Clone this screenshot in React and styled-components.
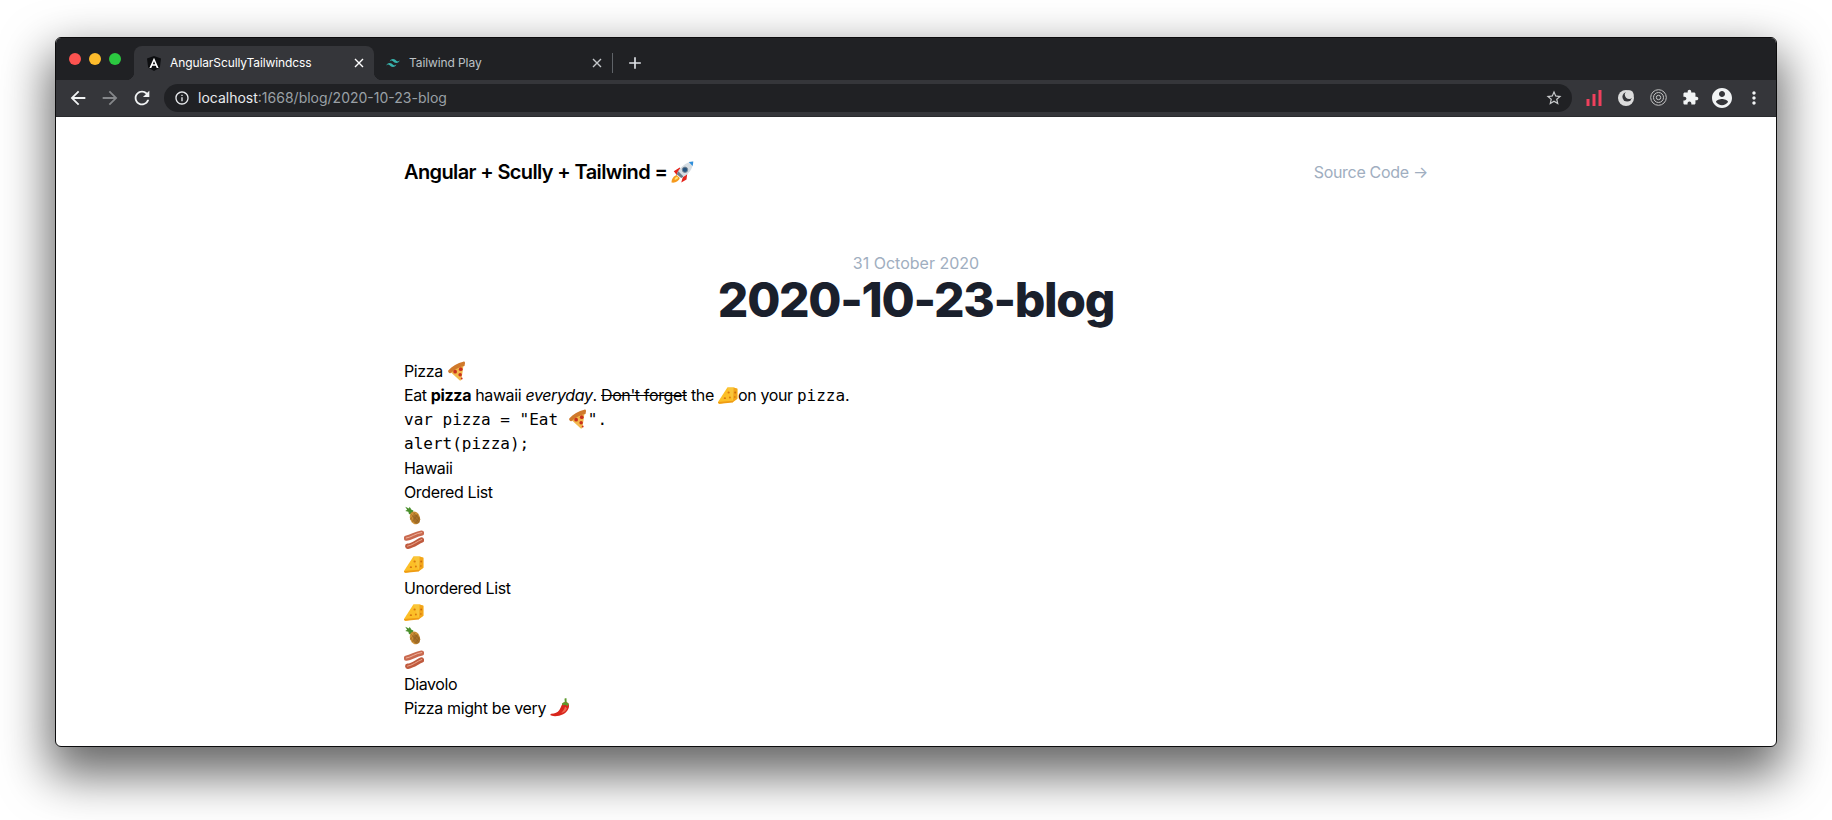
import styled, { createGlobalStyle } from 'styled-components';

const GlobalStyle = createGlobalStyle`
  html, body {
    margin: 0;
    padding: 0;
    background: #fff;
  }
  body {
    font-family: Inter, 'Liberation Sans', sans-serif;
  }
`;

const Page = styled.div`
  width: 1832px;
  height: 820px;
  padding: 37px 55px 73px;
  box-sizing: border-box;
  overflow: hidden;
  background: #fff;
`;

const BrowserWindow = styled.div`
  height: 710px;
  box-sizing: border-box;
  display: flex;
  flex-direction: column;
  border: 1px solid #0c0c0d;
  border-radius: 6px;
  box-shadow: 0 22px 48px 6px rgba(0, 0, 0, 0.6);
  overflow: hidden;
  background: #fff;
`;

const TabStrip = styled.div`
  height: 42px;
  flex: none;
  display: flex;
  align-items: flex-end;
  padding-left: 13px;
  background: #202124;
  box-sizing: border-box;
`;

const TrafficLights = styled.div`
  display: flex;
  gap: 8px;
  align-self: flex-start;
  margin-top: 15px;
  margin-right: 13px;
`;

const Light = styled.span`
  width: 12px;
  height: 12px;
  border-radius: 50%;
  background: ${props => props.$color};
`;

const Tab = styled.div`
  position: relative;
  width: ${props => props.$width}px;
  height: 34px;
  display: flex;
  align-items: center;
  gap: ${props => (props.$active ? 9 : 8)}px;
  padding: 0 10px 0 ${props => (props.$active ? 13 : 11)}px;
  box-sizing: border-box;
  border-radius: 8px 8px 0 0;
  font-size: 12px;
  color: ${props => (props.$active ? '#fff' : '#bdc1c6')};
  background: ${props => (props.$active ? '#35363a' : 'transparent')};

  ${props =>
    props.$active &&
    `
    &::before, &::after {
      content: '';
      position: absolute;
      bottom: 0;
      width: 8px;
      height: 8px;
    }
    &::before {
      left: -8px;
      background: radial-gradient(circle at 0 0, #202124 8px, #35363a 8.5px);
    }
    &::after {
      right: -8px;
      background: radial-gradient(circle at 100% 0, #202124 8px, #35363a 8.5px);
    }
  `}
`;

const TabTitle = styled.span`
  flex: 1;
  margin-bottom: 1px;
  white-space: nowrap;
  letter-spacing: -0.1px;
`;

const TabClose = styled.span`
  display: flex;
  color: ${props => (props.$active ? '#fff' : '#c4c7ca')};
`;

const TabSeparator = styled.span`
  width: 1px;
  height: 20px;
  margin-bottom: 7px;
  background: #5f6368;
`;

const NewTab = styled.div`
  width: 44px;
  height: 34px;
  display: flex;
  align-items: center;
  justify-content: center;
  color: #dee1e6;
`;

const Toolbar = styled.div`
  height: 37px;
  flex: none;
  display: flex;
  align-items: center;
  padding: 0 6px 1px 6px;
  box-sizing: border-box;
  background: #35363a;
  border-bottom: 1px solid #2a2b2e;
`;

const NavButton = styled.div`
  width: 32px;
  height: 28px;
  flex: none;
  display: flex;
  align-items: center;
  justify-content: center;
  color: ${props => (props.$dim ? '#85878a' : '#f1f3f4')};
`;

const Omnibox = styled.div`
  flex: 1;
  height: 28px;
  margin: 0 6px;
  display: flex;
  align-items: center;
  padding: 0 9px 0 10px;
  border-radius: 14px;
  background: #202124;
  font-size: 14px;
  color: #9aa0a6;
  white-space: nowrap;
`;

const InfoSlot = styled.span`
  display: flex;
  margin-right: 8px;
  color: #e8eaed;
`;

const Host = styled.span`
  color: #e8eaed;
`;

const Spacer = styled.span`
  flex: 1;
`;

const ExtensionButton = styled.div`
  width: 32px;
  height: 28px;
  flex: none;
  display: flex;
  align-items: center;
  justify-content: center;
  color: ${props => props.$color || '#f1f3f4'};
`;

const Content = styled.main`
  flex: 1;
  width: 1024px;
  margin: 0 auto;
  padding-top: 41px;
  color: #000;
`;

const SiteHeader = styled.header`
  display: flex;
  justify-content: space-between;
  align-items: center;
  height: 28px;
`;

const Brand = styled.div`
  display: flex;
  align-items: center;
  gap: 3px;
  font-size: 20px;
  font-weight: 600;
  letter-spacing: -0.63px;
`;

const SourceLink = styled.a`
  font-size: 16px;
  letter-spacing: -0.3px;
  color: #a0aec0;
  text-decoration: none;
`;

const PostHead = styled.div`
  margin-top: 65px;
  text-align: center;
`;

const PostDate = styled.div`
  font-size: 16px;
  line-height: 24px;
  color: #a0aec0;
`;

const PostTitle = styled.h1`
  margin: 1px 0 0;
  font-size: 48px;
  line-height: 48px;
  font-weight: 800;
  letter-spacing: -1.3px;
  color: #1a202c;
`;

const Article = styled.article`
  margin-top: 35px;
  font-size: 16px;
  line-height: 24px;
  letter-spacing: -0.37px;
`;

const Line = styled.div`
  height: 24px;
  white-space: nowrap;
`;

const CodeBlock = styled.div`
  margin-bottom: 1px;
`;

const Code = styled.code`
  font-family: 'DejaVu Sans Mono', 'Liberation Mono', monospace;
  font-size: 16px;
  line-height: 24px;
  letter-spacing: 0;
`;

const Glyph = styled.svg`
  display: inline-block;
  width: ${props => props.$size || 20}px;
  height: ${props => props.$size || 20}px;
  vertical-align: ${props => props.$shift || '-4px'};
`;

const Icon = ({ d, size = 24, fill = 'currentColor' }) => (
  <svg width={size} height={size} viewBox="0 0 24 24" fill={fill}>
    <path d={d} />
  </svg>
);

const CloseIcon = () => (
  <svg width="10" height="10" viewBox="0 0 10 10" stroke="currentColor" strokeWidth="1.4">
    <path d="M1 1l8 8M9 1l-8 8" />
  </svg>
);

const AngularLogo = () => (
  <svg width="14" height="15" viewBox="0 0 14 15">
    <path d="M7 0L0 2.400l1.100 9.200L7 15l5.900-3.400L14 2.400z" fill="#0d0e10" />
    <path d="M7 1.800L2.400 12h1.900l.9-2.300h3.600l.9 2.300h1.900zM5.800 8.300L7 5.300l1.200 3z" fill="#fff" />
  </svg>
);

const TailwindLogo = () => (
  <svg width="16" height="16" viewBox="0 0 24 24" fill="#38b2ac">
    <path d="M12 6c-2.670 0-4.330 1.330-5 4 1-1.330 2.170-1.830 3.500-1.500.76.19 1.310.74 1.910 1.350.98 1 2.090 2.150 4.590 2.150 2.670 0 4.330-1.330 5-4-1 1.330-2.170 1.830-3.500 1.500-.76-.19-1.310-.74-1.910-1.350C15.610 7.150 14.500 6 12 6zm-5 6c-2.670 0-4.330 1.330-5 4 1-1.330 2.170-1.830 3.500-1.500.76.19 1.310.74 1.910 1.350.98 1 2.090 2.150 4.590 2.150 2.670 0 4.330-1.330 5-4-1 1.330-2.170 1.830-3.500 1.500-.76-.19-1.310-.74-1.910-1.350C10.610 13.150 9.500 12 7 12z" />
  </svg>
);

const SignalBars = () => (
  <svg width="16" height="18" viewBox="0 0 16 18" fill="#f0405c">
    <rect x="0.500" y="10" width="3" height="7" />
    <rect x="6.500" y="5" width="3" height="12" />
    <rect x="12.500" y="1" width="3" height="16" />
  </svg>
);

const MoonBadge = () => (
  <svg width="16" height="16" viewBox="0 0 16 16">
    <circle cx="8" cy="8" r="8" fill="#dcdcdc" />
    <circle cx="9.200" cy="6.800" r="4.800" fill="#35363a" />
    <circle cx="11.200" cy="4.600" r="4.400" fill="#dcdcdc" />
  </svg>
);

const TargetBadge = () => (
  <svg width="17" height="17" viewBox="0 0 17 17" fill="none" stroke="#c4c4c4" strokeWidth="1">
    <circle cx="8.500" cy="8.500" r="7.800" />
    <circle cx="8.500" cy="8.500" r="5" />
    <circle cx="8.500" cy="8.500" r="2.200" />
  </svg>
);

const Rocket = () => (
  <Glyph $size={24} viewBox="0 0 32 32">
    <path d="M2 30c0-5 3-9 7-10l4 4c-1 4-6 7-11 6z" fill="#f59a1d" />
    <path d="M6 26c0-2 2-4 4-4l1 2c-1 1-3 3-5 2z" fill="#ffe36e" />
    <path d="M5 15l8-5 2 3-6 7zM23 18l-1 8-7 4 2-7z" fill="#e5231b" />
    <path d="M9 19C12 10 21 3 31 2c0 10-7 18-16 22z" fill="#d5dde3" />
    <path d="M9 19l6 5 3-2-7-7z" fill="#6e7c88" />
    <path d="M25 2.600L31 2c0 2-.3 4-.9 6z" fill="#2f8fdb" />
    <circle cx="20" cy="13" r="3.600" fill="#24527d" stroke="#7b8894" strokeWidth="1.200" />
  </Glyph>
);

const Pizza = () => (
  <Glyph viewBox="0 0 32 32">
    <path d="M3 15L27 3l-4 27c-.4 1.500-2 1.500-3 .6z" fill="#f2b84c" />
    <path d="M2 15C8 8 17 3 26 1c2-.4 3 .8 2.800 2.600L28 8C21 9 13 13 6 19c-2 1.500-5-1.500-4-4z" fill="#d0792b" />
    <circle cx="13" cy="17" r="3" fill="#c9301c" />
    <circle cx="22" cy="13" r="3" fill="#c9301c" />
    <circle cx="21" cy="22" r="2.800" fill="#c9301c" />
    <circle cx="23.500" cy="28" r="1.500" fill="#c9301c" />
  </Glyph>
);

const Cheese = () => (
  <Glyph viewBox="0 0 32 32">
    <path d="M0 27L15 4l10 0-1 22L3 30c-2 0-3-1.500-3-3z" fill="#fcbf27" />
    <path d="M15 4l10 0 6 2v16l-7 5z" fill="#f9c53a" />
    <path d="M25 4l6 2v16l-7 5z" fill="#f3a51a" />
    <path d="M0 27l24-2v3L3 30c-2 0-3-1.500-3-3z" fill="#ef9c14" />
    <ellipse cx="17" cy="12" rx="1.800" ry="1.500" fill="#d9780f" />
    <ellipse cx="11" cy="21" rx="1.800" ry="1.500" fill="#d9780f" />
    <circle cx="19" cy="20" r="1.500" fill="#d9780f" />
    <circle cx="27.500" cy="12" r="1.500" fill="#c9690c" />
    <circle cx="27" cy="19" r="1.200" fill="#c9690c" />
  </Glyph>
);

const Pineapple = () => (
  <Glyph viewBox="0 0 32 32">
    <path d="M2 1l6 3 1-3 3 5 3 1-1 5-6 1-1-4-5-1 3-2z" fill="#4a8f2c" />
    <ellipse cx="17.500" cy="19" rx="8" ry="10.500" transform="rotate(-20 17.500 19)" fill="#cf9136" />
    <ellipse cx="20" cy="21" rx="5" ry="7.500" transform="rotate(-20 20 21)" fill="#7f5219" opacity="0.5" />
    <path d="M11 13l13 13M14 10l12 12M10 19l9 9M18 10L10 22M22 13L13 26M25 18l-6 9" stroke="#8b5a1b" strokeWidth="0.800" />
  </Glyph>
);

const Bacon = () => (
  <Glyph viewBox="0 0 32 32">
    <path d="M4 13C12 12 19 6 28 5" fill="none" stroke="#c9694f" strokeWidth="8.500" strokeLinecap="round" />
    <path d="M3 13C11 12 19 5 29 4" fill="none" stroke="#f0b8a0" strokeWidth="1.500" />
    <path d="M6 26C14 25 21 19 28 16" fill="none" stroke="#bf5a3e" strokeWidth="8.500" strokeLinecap="round" />
    <path d="M5 26C13 25 21 18 29 15" fill="none" stroke="#ecab90" strokeWidth="1.500" />
  </Glyph>
);

const Chili = () => (
  <Glyph viewBox="0 0 32 32">
    <path d="M26 0c1 2 0 5 1 7l-3 1c-1-2 0-5-1-7z" fill="#5d9a2d" />
    <path d="M20 9c3-3 8-3 10 1 2 6-3 13-9 16-6 3-14 4-19 2-2-1-2-2 0-3 6 0 10-2 13-6 2-3 3-7 5-10z" fill="#d8261c" />
    <path d="M19 9c3-3 8-3 11 0l-2 4c-2-2-4-2-7-1z" fill="#5d9a2d" />
    <path d="M24 14c2 1 3 2 3 3-2 4-5 6-9 7 3-3 5-6 6-10z" fill="#f06a55" />
  </Glyph>
);

const d = {
  back: 'M20 11H7.830l5.590-5.590L12 4l-8 8 8 8 1.410-1.410L7.830 13H20v-2z',
  forward: 'M12 4l-1.410 1.410L16.170 11H4v2h12.170l-5.580 5.590L12 20l8-8z',
  reload:
    'M17.650 6.350C16.200 4.900 14.210 4 12 4c-4.420 0-7.990 3.580-7.990 8s3.570 8 7.990 8c3.730 0 6.840-2.550 7.730-6h-2.080c-.820 2.330-3.040 4-5.650 4-3.310 0-6-2.690-6-6s2.690-6 6-6c1.660 0 3.140.690 4.220 1.780L13 11h7V4l-2.350 2.350z',
  info: 'M11 7h2v2h-2zm0 4h2v6h-2zm1-9C6.480 2 2 6.480 2 12s4.480 10 10 10 10-4.480 10-10S17.520 2 12 2zm0 18c-4.410 0-8-3.590-8-8s3.590-8 8-8 8 3.590 8 8-3.590 8-8 8z',
  star: 'M22 9.240l-7.190-.620L12 2 9.190 8.630 2 9.240l5.460 4.730L5.820 21 12 17.270 18.180 21l-1.630-7.030L22 9.240zM12 15.400l-3.760 2.270 1-4.280-3.320-2.880 4.380-.380L12 6.100l1.710 4.040 4.380.380-3.320 2.880 1 4.280L12 15.400z',
  puzzle:
    'M20.500 11H19V7c0-1.100-.900-2-2-2h-4V3.500C13 2.120 11.880 1 10.500 1S8 2.120 8 3.500V5H4c-1.100 0-1.990.900-1.990 2v3.800H3.500c1.490 0 2.700 1.210 2.700 2.700s-1.210 2.700-2.700 2.700H2V20c0 1.100.900 2 2 2h3.800v-1.500c0-1.490 1.210-2.700 2.700-2.700 1.490 0 2.700 1.210 2.700 2.700V22H17c1.100 0 2-.900 2-2v-4h1.500c1.380 0 2.500-1.120 2.500-2.500S21.880 11 20.500 11z',
  account:
    'M12 2C6.480 2 2 6.480 2 12s4.480 10 10 10 10-4.480 10-10S17.520 2 12 2zm0 3c1.660 0 3 1.340 3 3s-1.340 3-3 3-3-1.340-3-3 1.340-3 3-3zm0 14.200c-2.500 0-4.710-1.280-6-3.220.030-1.990 4-3.080 6-3.080 1.990 0 5.970 1.090 6 3.080-1.290 1.940-3.500 3.220-6 3.220z',
  more: 'M12 8c1.100 0 2-.900 2-2s-.900-2-2-2-2 .900-2 2 .900 2 2 2zm0 2c-1.100 0-2 .900-2 2s.900 2 2 2 2-.900 2-2-.900-2-2-2zm0 6c-1.100 0-2 .900-2 2s.900 2 2 2 2-.900 2-2-.900-2-2-2z',
  plus: 'M19 13h-6v6h-2v-6H5v-2h6V5h2v6h6v2z',
};

const App = () => (
  <Page>
    <GlobalStyle />
    <BrowserWindow>
      <TabStrip>
        <TrafficLights>
          <Light $color="#fc5350" />
          <Light $color="#fdbc2c" />
          <Light $color="#2bc840" />
        </TrafficLights>
        <Tab $active $width={240}>
          <AngularLogo />
          <TabTitle>AngularScullyTailwindcss</TabTitle>
          <TabClose $active>
            <CloseIcon />
          </TabClose>
        </Tab>
        <Tab $width={238}>
          <TailwindLogo />
          <TabTitle>Tailwind Play</TabTitle>
          <TabClose>
            <CloseIcon />
          </TabClose>
        </Tab>
        <TabSeparator />
        <NewTab>
          <Icon d={d.plus} size={20} />
        </NewTab>
      </TabStrip>
      <Toolbar>
        <NavButton>
          <Icon d={d.back} size={22} />
        </NavButton>
        <NavButton $dim>
          <Icon d={d.forward} size={22} />
        </NavButton>
        <NavButton>
          <Icon d={d.reload} size={22} />
        </NavButton>
        <Omnibox>
          <InfoSlot>
            <Icon d={d.info} size={16} />
          </InfoSlot>
          <Host>localhost</Host>:1668/blog/2020-10-23-blog
          <Spacer />
          <Icon d={d.star} size={18} fill="#c8cacc" />
        </Omnibox>
        <ExtensionButton>
          <SignalBars />
        </ExtensionButton>
        <ExtensionButton>
          <MoonBadge />
        </ExtensionButton>
        <ExtensionButton>
          <TargetBadge />
        </ExtensionButton>
        <ExtensionButton>
          <Icon d={d.puzzle} size={17} />
        </ExtensionButton>
        <ExtensionButton>
          <Icon d={d.account} size={24} />
        </ExtensionButton>
        <ExtensionButton>
          <Icon d={d.more} size={20} />
        </ExtensionButton>
      </Toolbar>
      <Content>
        <SiteHeader>
          <Brand>
            Angular + Scully + Tailwind = <Rocket />
          </Brand>
          <SourceLink href="#">Source Code →</SourceLink>
        </SiteHeader>
        <PostHead>
          <PostDate>31 October 2020</PostDate>
          <PostTitle>2020-10-23-blog</PostTitle>
        </PostHead>
        <Article>
          <Line>
            Pizza <Pizza />
          </Line>
          <Line>
            Eat <strong>pizza</strong> hawaii <em>everyday</em>. <s>Don't forget</s> the <Cheese />
            on your <Code>pizza</Code>.
          </Line>
          <CodeBlock>
            <Line>
              <Code>
                var pizza = "Eat <Pizza />".
              </Code>
            </Line>
            <Line>
              <Code>alert(pizza);</Code>
            </Line>
          </CodeBlock>
          <Line>Hawaii</Line>
          <Line>Ordered List</Line>
          <Line>
            <Pineapple />
          </Line>
          <Line>
            <Bacon />
          </Line>
          <Line>
            <Cheese />
          </Line>
          <Line>Unordered List</Line>
          <Line>
            <Cheese />
          </Line>
          <Line>
            <Pineapple />
          </Line>
          <Line>
            <Bacon />
          </Line>
          <Line>Diavolo</Line>
          <Line>
            Pizza might be very <Chili />
          </Line>
        </Article>
      </Content>
    </BrowserWindow>
  </Page>
);

export default App;
